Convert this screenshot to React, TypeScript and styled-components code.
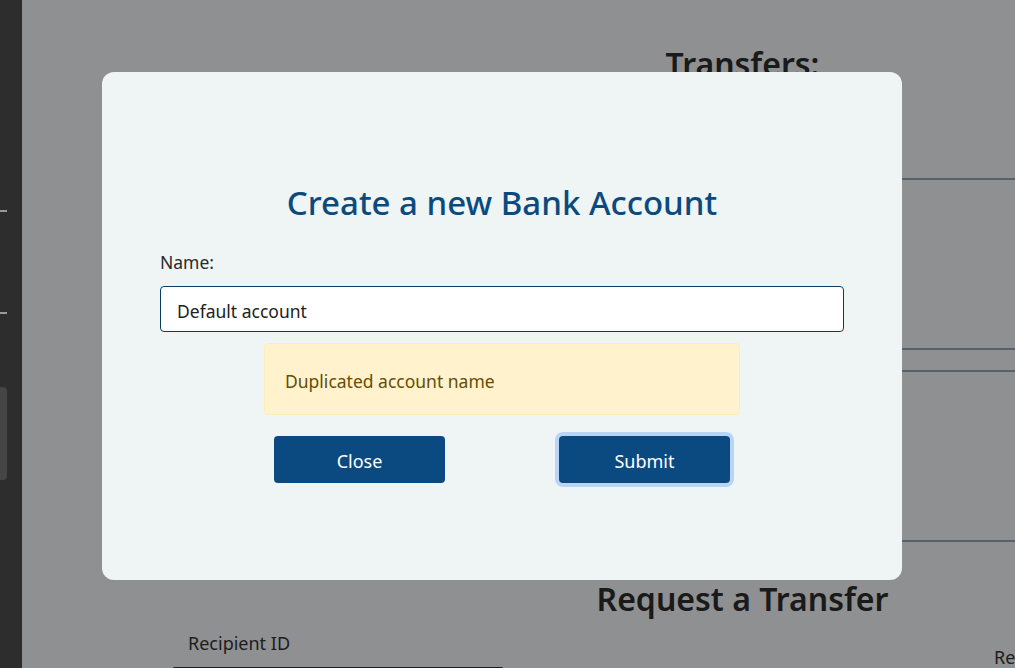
import React from "react";
import styled, { createGlobalStyle } from "styled-components";

const Global = createGlobalStyle`
  html, body { margin: 0; padding: 0; }
  body {
    width: 1015px;
    height: 668px;
    overflow: hidden;
    font-family: "Noto Sans", "Open Sans", sans-serif;
    background: #eef0f2;
  }
  * { box-sizing: border-box; }
`;

const Page = styled.div`
  display: flex;
  width: 1015px;
  height: 668px;
  overflow: hidden;
  background: #eef0f2;
`;

const Sidebar = styled.aside`
  width: 22px;
  flex-shrink: 0;
  background: #4b4b4b;
  display: flex;
  flex-direction: column;
  padding-top: 210px;
`;

const SideMark = styled.div<{ $gap: number }>`
  width: 7px;
  height: 2px;
  background: #ffffff;
  margin-bottom: ${(p) => p.$gap}px;
`;

const SideBlock = styled.div`
  width: 7px;
  height: 93px;
  background: #747474;
  border-radius: 0 4px 4px 0;
`;

const Main = styled.main`
  flex: 1;
  display: grid;
  grid-template-columns: 448px 545px;
  align-content: start;
  padding-top: 43px;
  color: #2f2f2f;
`;

const RightColumn = styled.section`
  grid-column: 2;
  display: flex;
  flex-direction: column;
`;

const PageHeading = styled.h2`
  margin: 0;
  font-size: 32px;
  line-height: 41px;
  font-weight: 600;
  text-align: center;
  color: #2c2c2c;
`;

const TransferCard = styled.div<{ $mt: number }>`
  height: 172px;
  margin-top: ${(p) => p.$mt}px;
  margin-left: -40px;
  border-top: 2px solid #8fa4b7;
  border-bottom: 2px solid #8fa4b7;
`;

const RequestHeading = styled(PageHeading)`
  margin-top: 36px;
`;

const FormRow = styled.div`
  grid-column: 1 / span 2;
  display: grid;
  grid-template-columns: 330px 1fr;
  column-gap: 491px;
  padding-left: 151px;
  margin-top: 11px;
  overflow: hidden;
`;

const Field = styled.div<{ $offset?: number; $indent?: number }>`
  display: flex;
  flex-direction: column;
  margin-top: ${(p) => p.$offset ?? 0}px;
  padding-left: ${(p) => p.$indent ?? 15}px;
  overflow: hidden;
`;

const FieldLabel = styled.label`
  font-size: 18px;
  line-height: 27px;
  color: #333;
  white-space: nowrap;
`;

const BgInput = styled.div`
  margin-top: 10px;
  margin-left: -15px;
  height: 40px;
  border: 1px solid #0b3d63;
  border-radius: 4px;
  background: #fff;
`;

const Overlay = styled.div`
  position: fixed;
  inset: 0;
  background: rgba(0, 0, 0, 0.4);
  display: flex;
  align-items: flex-start;
  padding: 72px 0 0 102px;
`;

const Modal = styled.div`
  width: 800px;
  height: 508px;
  background: #eff5f5;
  border-radius: 12px;
  padding: 110px 58px 0;
  display: flex;
  flex-direction: column;
`;

const Title = styled.h1`
  margin: 0;
  font-size: 33px;
  line-height: 41px;
  font-weight: 500;
  text-align: center;
  color: #0b4a7e;
`;

const Label = styled.label`
  margin-top: 26px;
  font-size: 17.5px;
  line-height: 27px;
  color: #2a2a2a;
`;

const Input = styled.input`
  margin-top: 10px;
  height: 46px;
  width: 100%;
  border: 1px solid #0b3d63;
  border-radius: 4px;
  background: #fff;
  padding: 3px 16px 0;
  font-family: inherit;
  font-size: 17.5px;
  color: #212121;
  outline: none;
`;

const Alert = styled.div`
  align-self: center;
  width: 476px;
  margin-top: 11px;
  padding: 4px 20px 0;
  height: 72px;
  display: flex;
  align-items: center;
  background: #fff2cc;
  border: 1px solid #ffecb5;
  border-radius: 4px;
  color: #664d03;
  font-size: 17.5px;
`;

const ButtonRow = styled.div`
  align-self: center;
  width: 476px;
  margin-top: 21px;
  padding: 0 10px;
  display: flex;
  justify-content: space-between;
`;

const Button = styled.button<{ $focused?: boolean }>`
  width: 171px;
  height: 47px;
  padding: 3px 0 0;
  border: none;
  border-radius: 4px;
  background: #0b4a80;
  color: #fff;
  font-family: inherit;
  font-size: 18px;
  cursor: pointer;
  box-shadow: ${(p) => (p.$focused ? "0 0 0 4px #b9d5f6" : "none")};
`;

export default function App() {
  return (
    <>
      <Global />
      <Page>
        <Sidebar>
          <SideMark $gap={100} />
          <SideMark $gap={73} />
          <SideBlock />
        </Sidebar>
        <Main>
          <RightColumn>
            <PageHeading>Transfers:</PageHeading>
            <TransferCard $mt={94} />
            <TransferCard $mt={20} />
            <RequestHeading>Request a Transfer</RequestHeading>
          </RightColumn>
          <FormRow>
            <Field>
              <FieldLabel>Recipient ID</FieldLabel>
              <BgInput />
            </Field>
            <Field $offset={14} $indent={0}>
              <FieldLabel>Reference</FieldLabel>
            </Field>
          </FormRow>
        </Main>
      </Page>
      <Overlay>
        <Modal>
          <Title>Create a new Bank Account</Title>
          <Label>Name:</Label>
          <Input defaultValue="Default account" />
          <Alert>Duplicated account name</Alert>
          <ButtonRow>
            <Button>Close</Button>
            <Button $focused>Submit</Button>
          </ButtonRow>
        </Modal>
      </Overlay>
    </>
  );
}
